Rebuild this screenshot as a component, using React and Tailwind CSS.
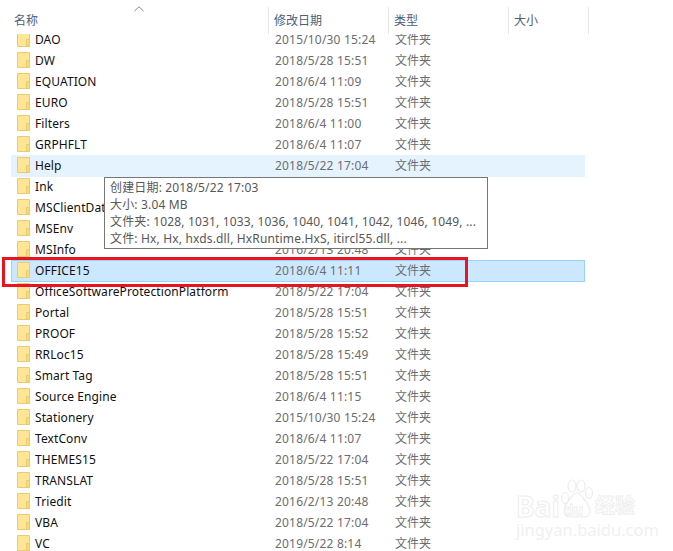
const rows = [
  ["DAO", "2015/10/30 15:24"],
  ["DW", "2018/5/28 15:51"],
  ["EQUATION", "2018/6/4 11:09"],
  ["EURO", "2018/5/28 15:51"],
  ["Filters", "2018/6/4 11:00"],
  ["GRPHFLT", "2018/6/4 11:07"],
  ["Help", "2018/5/22 17:04", "hover"],
  ["Ink", "2018/6/4 11:07"],
  ["MSClientData", "2018/5/28 15:51"],
  ["MSEnv", "2018/5/28 15:51"],
  ["MSInfo", "2016/2/13 20:48"],
  ["OFFICE15", "2018/6/4 11:11", "selected"],
  ["OfficeSoftwareProtectionPlatform", "2018/5/22 17:04"],
  ["Portal", "2018/5/28 15:51"],
  ["PROOF", "2018/5/28 15:52"],
  ["RRLoc15", "2018/5/28 15:49"],
  ["Smart Tag", "2018/5/28 15:51"],
  ["Source Engine", "2018/6/4 11:15"],
  ["Stationery", "2015/10/30 15:24"],
  ["TextConv", "2018/6/4 11:07"],
  ["THEMES15", "2018/5/22 17:04"],
  ["TRANSLAT", "2018/5/28 15:51"],
  ["Triedit", "2016/2/13 20:48"],
  ["VBA", "2018/5/22 17:04"],
  ["VC", "2019/5/22 8:14"],
];

function Folder() {
  return (
    <svg width="14" height="16" viewBox="0 0 14 16" className="-mt-[2px] shrink-0">
      <path d="M1.5 .5H13.5V15.5H1.5Z" fill="#ffe595" stroke="#eccb6e" />
      <path d="M10.5 8.5H13.5V15.5H10.5Z" fill="#fbd976" stroke="#eccb6e" />
    </svg>
  );
}

function Row({ name, date, state }) {
  const bg =
    state === "selected"
      ? "bg-[#cce8ff] border border-[#99d1ff]"
      : state === "hover"
        ? "bg-[#e5f3ff] border border-[#e5f3ff]"
        : "border border-transparent";
  return (
    <div className={`flex h-[22px] -mb-px items-center ${bg}`}>
      <div className="flex w-[263px] shrink-0 items-center gap-[5px] pl-[4px]">
        <Folder />
        <span className="whitespace-nowrap tracking-[0.1px] text-[#111]">{name}</span>
      </div>
      <div className="w-[120px] shrink-0 tracking-[0.18px] text-[#6d6d6d]">{date}</div>
      <div className="text-[#6d6d6d]">文件夹</div>
    </div>
  );
}

function Watermark() {
  return (
    <div className="absolute left-[516px] top-[479px] w-[122px]">
      <div className="flex h-[40px] items-end">
        <div className="w-[45px] text-[28px] font-bold leading-[26px] text-white [-webkit-text-stroke:1px_#ededed]">
          Bai
        </div>
        <div className="relative h-[40px] w-[33px] shrink-0">
          <svg width="33" height="40" viewBox="0 0 33 40" className="absolute left-0 top-0">
            <g fill="#fff" stroke="#ededed" strokeWidth="1.2">
              <ellipse cx="11" cy="7" rx="4" ry="6" />
              <ellipse cx="20" cy="7" rx="4" ry="6" />
              <ellipse cx="28" cy="14" rx="3.5" ry="5.5" />
              <ellipse cx="4" cy="19" rx="3.5" ry="5.5" />
              <path d="M16 14c-5 0-6 5-9 9-5 5-6 15 3 15 4 0 8-1 12 0 9 1 8-10 3-15-3-3-4-9-9-9Z" />
            </g>
          </svg>
          <div className="absolute left-[3px] top-[22px] text-[15px] font-bold leading-[16px] text-white [-webkit-text-stroke:0.8px_#ededed]">
            du
          </div>
        </div>
        <div className="ml-[1px] whitespace-nowrap pb-[1px] text-[20px] font-bold leading-[24px] text-white [-webkit-text-stroke:0.8px_#ededed]">
          经验
        </div>
      </div>
      <div className="mt-[2px] whitespace-nowrap text-[16.5px] leading-[18px] text-[#f0f0f0]">
        jingyan.baidu.com
      </div>
    </div>
  );
}

export default function App() {
  return (
    <div
      className="relative h-[551px] w-[673px] overflow-hidden bg-white text-[12px] leading-[16px]"
      style={{ fontFamily: '"Noto Sans", "Noto Sans CJK SC", sans-serif' }}
    >
      <div className="relative flex h-[34px] pl-[8px] pt-[7px] text-[#4c607a]">
        <svg width="10" height="6" viewBox="0 0 10 6" className="absolute left-[134px] top-[6px]">
          <path d="M.5 5 5 .8 9.5 5" fill="none" stroke="#8a8a8a" />
        </svg>
        <div className="flex h-[27px] w-[261px] items-end border-r border-[#e5e5e5] pb-[5px] pl-[6px]">名称</div>
        <div className="flex h-[27px] w-[120px] items-end border-r border-[#e5e5e5] pb-[5px] pl-[5px]">修改日期</div>
        <div className="flex h-[27px] w-[120px] items-end border-r border-[#e5e5e5] pb-[5px] pl-[5px]">类型</div>
        <div className="flex h-[27px] w-[80px] items-end border-r border-[#e5e5e5] pb-[5px] pl-[5px]">大小</div>
      </div>

      <div className="h-[517px] overflow-hidden">
        <div className="ml-[11px] -mt-[5px] w-[574px]">
          {rows.map((r) => (
            <Row key={r[0]} name={r[0]} date={r[1]} state={r[2]} />
          ))}
        </div>
      </div>

      <div className="absolute left-[104px] top-[177px] flex h-[72px] w-[384px] flex-col justify-center border border-[#767676] bg-white pl-[5px] leading-[17px] tracking-[0.16px] text-[#575757]">
        <div className="whitespace-nowrap">创建日期: 2018/5/22 17:03</div>
        <div>大小: 3.04 MB</div>
        <div className="whitespace-nowrap">文件夹: 1028, 1031, 1033, 1036, 1040, 1041, 1042, 1046, 1049, ...</div>
        <div className="whitespace-nowrap">文件: Hx, Hx, hxds.dll, HxRuntime.HxS, itircl55.dll, ...</div>
      </div>

      <div className="absolute left-[2px] top-[257px] h-[30px] w-[466px] border-[3px] border-[#e8141f]" />

      <Watermark />
    </div>
  );
}
